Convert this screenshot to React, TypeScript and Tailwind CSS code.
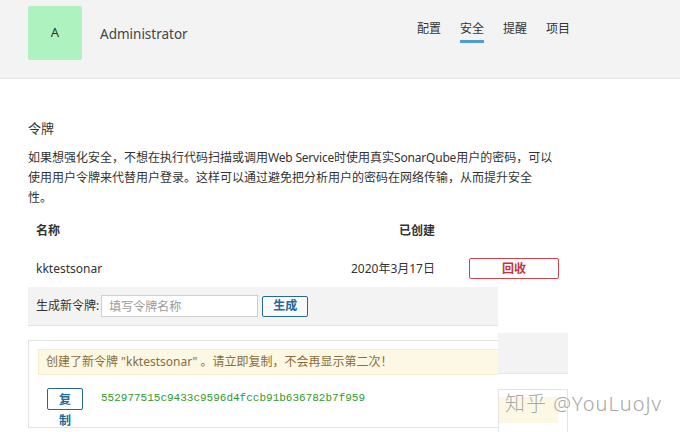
import React from 'react';

const NAV = ['配置', '安全', '提醒', '项目'];

export default function App() {
  return (
    <div className="relative w-[680px] h-[432px] overflow-hidden bg-white text-[#333] font-['Noto_Sans','Noto_Sans_CJK_SC',sans-serif]">
      {/* Header */}
      <header className="h-[79px] bg-[#f3f3f3] border-b border-[#e6e6e6] flex items-start pl-[28px] pr-[110px] pt-[6px]">
        <div className="w-[54px] h-[54px] rounded-[2px] bg-[#adf2bf] flex items-center justify-center text-[13px] text-[#333]">A</div>
        <div className="ml-[18px] mt-[18px] text-[13.5px] text-[#444]">Administrator</div>
        <nav className="ml-auto mt-[14px] flex gap-[19px] text-[12px] text-[#333]">
          {NAV.map(n => (
            <div key={n} className="relative pb-[4px]">
              {n}
              {n === '安全' && <span className="absolute left-0 right-0 bottom-[-1px] h-[3px] bg-[#4b9fd5]" />}
            </div>
          ))}
        </nav>
      </header>

      <main className="pl-[28px] pt-[39px]">
        <div className="text-[13px] leading-[20px]">令牌</div>
        <p className="mt-[10px] text-[12px] leading-[20px] whitespace-nowrap">
          如果想强化安全，不想在执行代码扫描或调用<span className="tracking-[-0.2px]">Web Service</span>时使用真实<span className="tracking-[-0.2px]">SonarQube</span>用户的密码，可以<br />
          使用用户令牌来代替用户登录。这样可以通过避免把分析用户的密码在网络传输，从而提升安全<br />
          性。
        </p>

        {/* Tokens table */}
        <div className="mt-[4px] w-[539px] text-[12px]">
          <div className="h-[38px] flex items-center font-bold">
            <div className="flex-1 pl-[8px]">名称</div>
            <div className="w-[100px] text-right">已创建</div>
            <div className="w-[132px]" />
          </div>
          <div className="h-[37px] flex items-center">
            <div className="flex-1 pl-[8px]">kktestsonar</div>
            <div className="w-[100px] text-right">2020年3月17日</div>
            <div className="pl-[34px] pr-[8px]">
              <button className="w-[90px] h-[21px] border border-[#d0434d] rounded-[2px] text-[#c8303c] text-[12px] font-bold leading-none">回收</button>
            </div>
          </div>
        </div>

        {/* Generate form */}
        <div className="w-[470px] h-[39px] bg-[#f3f3f3] border-b border-[#e2e2e2] flex items-center pl-[8px] text-[12px]">
          <span>生成新令牌:</span>
          <input
            className="ml-[2px] w-[157px] h-[22px] border border-[#cfcfcf] bg-white px-[7px] text-[12px] outline-none placeholder:text-[#9a9a9a]"
            placeholder="填写令牌名称"
          />
          <button className="ml-[4px] w-[46px] h-[21px] border border-[#236a97] rounded-[2px] bg-[#fafafa] text-[#236a97] font-bold text-[12px] leading-none">生成</button>
        </div>

        {/* New token notice */}
        <div className="flex">
          <div className="w-[470px] pt-[14px]">
            <div className="h-[88px] border border-r-0 border-[#e3e3e3] pt-[8px] pl-[9px]">
              <div className="h-[26px] bg-[#fcf8e3] border border-r-0 border-[#faebcc] flex items-center pl-[7px] text-[12px] text-[#8a6d3b]">
                创建了新令牌 "kktestsonar" 。请立即复制，不会再显示第二次！
              </div>
              <div className="flex items-start mt-[13px] pl-[9px]">
                <div className="w-[36px] h-[22px] shrink-0 border border-[#236a97] rounded-[2px] bg-white px-[6px] text-center text-[#236a97] font-bold text-[12px] leading-[21px]">复制</div>
                <span className="ml-[18px] mt-[2px] font-['Liberation_Mono',monospace] text-[11px] text-[#2e9a2e]">552977515c9433c9596d4fccb91b636782b7f959</span>
              </div>
            </div>
          </div>
          <div className="w-[70px]">
            <div className="mt-[7px] h-[41px] bg-[#f3f3f3] border-b border-[#e6e6e6]" />
            <div className="mt-[15px] h-[50px] border border-[#e3e3e3] pt-[7px]">
              <div className="w-[59px] h-[26px] bg-[#fcf8e3]" />
            </div>
          </div>
        </div>
      </main>

      {/* Watermark */}
      <div className="absolute left-[505px] top-[389px] text-[20px] tracking-[1px] text-[#a6a6a6] font-light font-['Noto_Sans','Noto_Sans_CJK_SC',sans-serif] [text-shadow:0_0_2px_#fff]">
        知乎 @YouLuoJv
      </div>
    </div>
  );
}
